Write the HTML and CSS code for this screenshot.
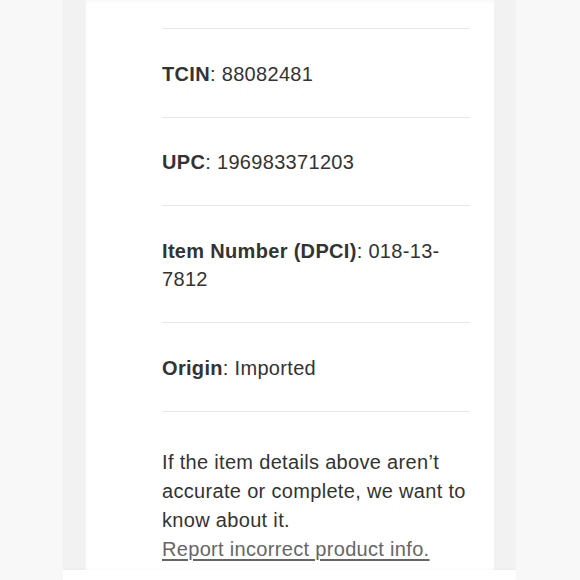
FILE: index.html
```html
<!DOCTYPE html>
<html lang="en">
<head>
<meta charset="utf-8">
<title>Specifications</title>
<link rel="stylesheet" href="styles.css">
</head>
<body>
<div class="sheet">
  <div class="card">
    <div class="row"><b>TCIN</b>: 88082481</div>
    <div class="row"><b>UPC</b>: 196983371203</div>
    <div class="row"><b>Item Number (DPCI)</b>: 018-13-7812</div>
    <div class="row"><b>Origin</b>: Imported</div>
    <div class="note">
      <p>If the item details above aren’t accurate or complete, we want to know about it.</p>
      <a class="report" href="#">Report incorrect product info.</a>
    </div>
  </div>
  <div class="footer"></div>
</div>
</body>
</html>
```
FILE: styles.css
```css
html, body {
  margin: 0;
  padding: 0;
  height: 100%;
  background: #f8f8f8;
  overflow: hidden;
}
.sheet {
  width: 453px;
  height: 580px;
  margin-left: 63px;
  background: #f2f2f2;
  display: flex;
  flex-direction: column;
}
.card {
  flex: 1;
  margin: 0 22px 0 23px;
  background: #fff;
  padding: 28px 24px 0 76px;
  overflow: hidden;
  box-shadow: inset 0 4px 4px -3px rgba(0,0,0,0.04);
  font-family: "Liberation Sans", Arial, sans-serif;
  font-size: 20px;
  letter-spacing: 0.32px;
  line-height: 28.5px;
  color: #333;
}
.row {
  border-top: 1px solid #e7e7e7;
  padding: 30.5px 0 28.5px;
}
.row b {
  font-weight: 700;
}
.note {
  border-top: 1px solid #e7e7e7;
  padding-top: 36.5px;
  line-height: 29px;
}
.note p {
  margin: 0;
}
.report {
  color: #666;
  text-decoration: underline;
  text-underline-offset: 3px;
}
.footer {
  height: 10px;
  background: #fff;
  box-shadow: 0 -1px 2px rgba(0,0,0,0.03);
}
```
